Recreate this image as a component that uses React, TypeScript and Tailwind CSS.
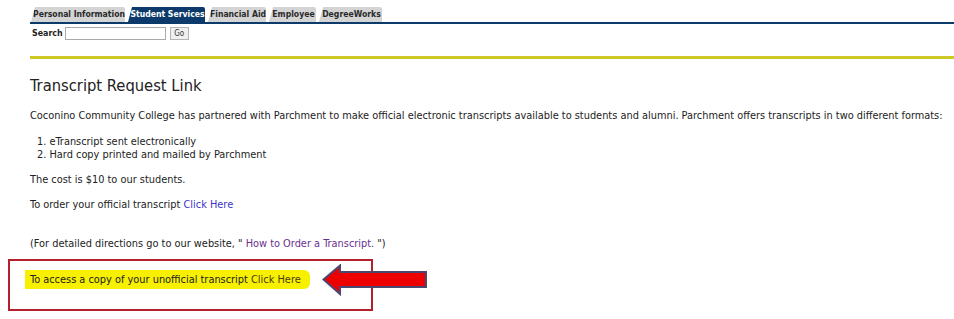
const tabs = [
  { label: "Personal Information", active: false, w: "w-[94px]" },
  { label: "Student Services", active: true, w: "w-[77px]" },
  { label: "Financial Aid", active: false, w: "w-[58px]" },
  { label: "Employee", active: false, w: "w-[47px]" },
  { label: "DegreeWorks", active: false, w: "w-[63px]" },
];

function Tab({ label, active, w }: { label: string; active: boolean; w: string }) {
  return (
    <div
      className={`${w} h-[15px] pl-[2px] flex items-center justify-center whitespace-nowrap text-[8.6px] font-bold leading-none rounded-tr-[2px] [clip-path:polygon(4px_0,100%_0,100%_100%,0_100%)] ${
        active ? "bg-[#0c3a6b] text-white" : "bg-[#d4d4d4] text-[#2a2a2a]"
      }`}
    >
      {label}
    </div>
  );
}

function Arrow() {
  return (
    <svg width="106" height="32" viewBox="0 0 106 32" className="absolute left-[314px] top-[5px]">
      <polygon
        points="1.5,15.5 18,1.5 18,8 104,8 104,23 18,23 18,30"
        fill="#ee0000"
        stroke="#4a4870"
        strokeWidth="2"
      />
    </svg>
  );
}

export default function App() {
  return (
    <div className="w-[954px] h-[319px] bg-white overflow-hidden font-['DejaVu_Sans_Condensed','DejaVu_Sans',sans-serif] text-[#222]">
      <div className="pl-[30px] pt-[7px]">
        <div className="flex gap-[3px] pl-[1px]">
          {tabs.map((t) => (
            <Tab key={t.label} {...t} />
          ))}
        </div>
        <div className="h-[2px] bg-[#0c3a6b]" />
        <div className="flex items-center mt-[3px] ml-[2px] gap-[2px] text-[8.8px] font-bold text-[#222]">
          <span>Search</span>
          <div className="w-[101px] h-[13px] border border-[#a9a9a9] bg-white" />
          <div className="ml-[2px] w-[19px] h-[13px] border border-[#b5b5b5] bg-[#f0f0f0] text-[8px] font-normal text-[#333] flex items-center justify-center">
            Go
          </div>
        </div>
        <div className="h-[3px] bg-[#cdc926] mt-[16px]" />
        <h1 className="mt-[17px] text-[16.4px] leading-[20px] text-[#222]">Transcript Request Link</h1>
        <div className="text-[10.9px] leading-[13px] whitespace-nowrap">
          <p className="mt-[13px]">
            Coconino Community College has partnered with Parchment to make official electronic transcripts available to
            students and alumni. Parchment offers transcripts in two different formats:
          </p>
          <ol className="mt-[13px] pl-[7px]">
            <li>1. eTranscript sent electronically</li>
            <li>2. Hard copy printed and mailed by Parchment</li>
          </ol>
          <p className="mt-[12px]">The cost is $10 to our students.</p>
          <p className="mt-[12px]">
            To order your official transcript <span className="text-[#3a35c8]">Click Here</span>
          </p>
          <p className="mt-[26px]">
            (For detailed directions go to our website, &quot;{" "}
            <span className="text-[#6a2f8f]">How to Order a Transcript.</span> &quot;)
          </p>
        </div>
      </div>
      <div className="relative mt-[9px] ml-[8px]">
        <div className="w-[365px] h-[52px] border-2 border-[#b3202c] pl-[15px] pt-[9px]">
          <div className="w-fit bg-[#f7f000] text-[10.9px] leading-[19px] whitespace-nowrap pl-[5px] pr-[9px] rounded-r-[6px] text-[#222]">
            To access a copy of your unofficial transcript <span className="text-[#4b3c10]">Click Here</span>
          </div>
        </div>
        <Arrow />
      </div>
    </div>
  );
}
